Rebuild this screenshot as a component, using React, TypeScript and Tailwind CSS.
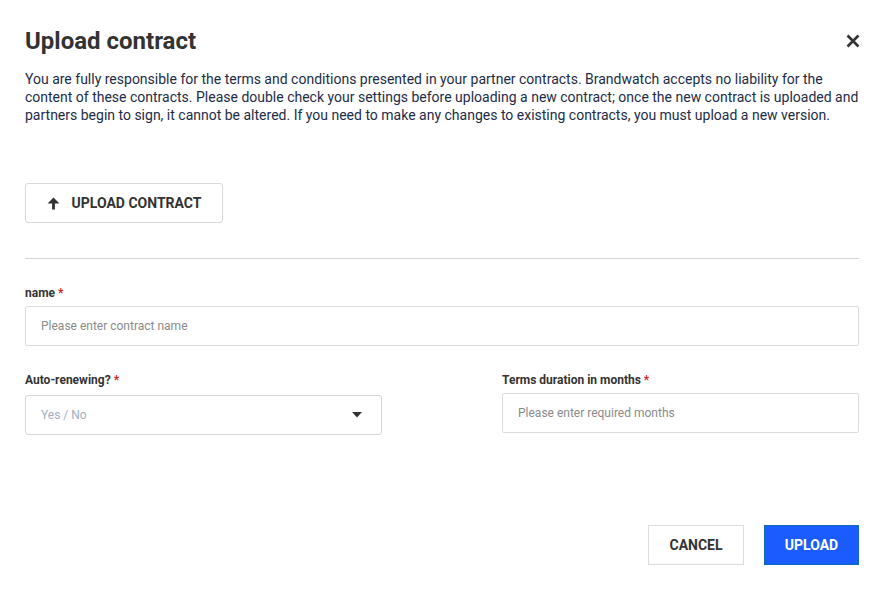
export default function App() {
  return (
    <div className="min-h-[592px] w-[884px] bg-white px-[25px] pt-[26px] font-['Roboto','Liberation_Sans',sans-serif]">
      <div className="flex items-center justify-between">
        <h1 className="text-[24px] font-bold leading-[30px] text-[#333333]">Upload contract</h1>
        <button className="mr-[-4px] flex h-5 w-5 items-center justify-center text-[#333333]" aria-label="Close">
          <svg width="14" height="14" viewBox="0 0 14 14">
            <path d="M1.5 1.5 L12.5 12.5 M12.5 1.5 L1.5 12.5" stroke="currentColor" strokeWidth="2.6" />
          </svg>
        </button>
      </div>
      <p className="mt-[14px] text-[14px] leading-[18px] text-[#1c2c47]">
        You are fully responsible for the terms and conditions presented in your partner contracts. Brandwatch accepts no liability for the
        content of these contracts. Please double check your settings before uploading a new contract; once the new contract is uploaded and
        partners begin to sign, it cannot be altered. If you need to make any changes to existing contracts, you must upload a new version.
      </p>

      <button className="mt-[59px] flex h-10 w-[198px] items-center justify-center gap-[12px] rounded-[3px] border border-[#d8d8d8] text-[14px] font-bold text-[#333333]">
        <svg width="13" height="13" viewBox="0 0 12 12">
          <path d="M6 0.5 L11.5 6 L7.3 6 L7.3 11.5 L4.7 11.5 L4.7 6 L0.5 6 Z" fill="#333333" />
        </svg>
        UPLOAD CONTRACT
      </button>

      <div className="mt-[35px] border-t border-[#d4d4d4]" />

      <label className="mt-[27px] block text-[12px] font-bold leading-[14px] text-[#333333]">
        name <span className="text-[#e02020]">*</span>
      </label>
      <div className="mt-[6px] flex h-10 items-center rounded-[2px] border border-[#dcdcdc] px-[15px] text-[12px] text-[#8a8a8a]">
        Please enter contract name
      </div>

      <div className="mt-[27px] grid grid-cols-2 gap-[120px]">
        <div>
          <label className="block text-[12px] font-bold leading-[14px] text-[#333333]">
            Auto-renewing? <span className="text-[#e02020]">*</span>
          </label>
          <div className="mt-[8px] flex h-10 items-center justify-between rounded-[3px] border border-[#d6d6d6] pl-[15px] pr-[19px] text-[12px] text-[#a3aec2]">
            Yes / No
            <svg width="10" height="6" viewBox="0 0 10 6">
              <path d="M0 0 L10 0 L5 5.5 Z" fill="#333333" />
            </svg>
          </div>
        </div>
        <div>
          <label className="block text-[12px] font-bold leading-[14px] text-[#333333]">
            Terms duration in months <span className="text-[#e02020]">*</span>
          </label>
          <div className="mt-[6px] flex h-10 items-center rounded-[2px] border border-[#dcdcdc] px-[15px] text-[12px] text-[#8a8a8a]">
            Please enter required months
          </div>
        </div>
      </div>

      <div className="mt-[90px] flex justify-end gap-5">
        <button className="flex h-10 w-24 items-center justify-center border border-[#dcdcdc] text-[14px] font-bold text-[#333333]">
          CANCEL
        </button>
        <button className="flex h-10 w-[95px] items-center justify-center border border-[#0f6ab8] bg-[#1a5cff] text-[14px] font-bold text-white">
          UPLOAD
        </button>
      </div>
    </div>
  );
}
